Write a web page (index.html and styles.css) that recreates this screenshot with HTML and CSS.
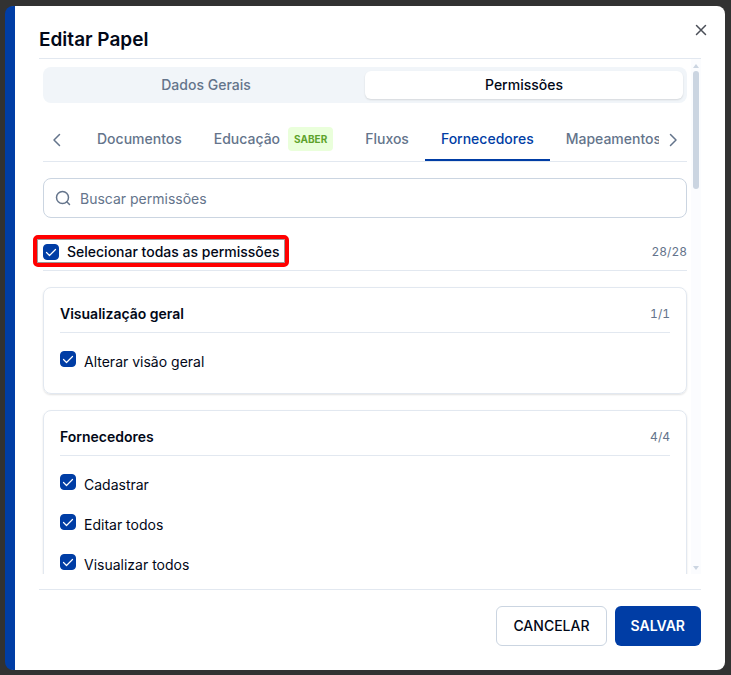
FILE: index.html
```html
<!DOCTYPE html>
<html lang="pt-BR">
<head>
  <meta charset="UTF-8">
  <meta name="viewport" content="width=device-width, initial-scale=1.0">
  <title>Editar Papel</title>
  <link rel="stylesheet" href="styles.css">
</head>

<body>
  <section class="modal" role="dialog" aria-labelledby="modalTitle">
    <header class="modal-header">
      <h1 id="modalTitle">Editar Papel</h1>
      <button type="button" class="btn-close" aria-label="Fechar">
        <svg width="16" height="16" viewBox="0 0 16 16"><path d="M3.5 3.5l9 9M12.5 3.5l-9 9"/></svg>
      </button>
    </header>

    <div class="modal-body">
      <div class="content">
        <div class="segmented">
          <button type="button">Dados Gerais</button>
          <button type="button" class="active">Permissões</button>
        </div>

        <!-- Abas dos módulos -->
        <nav class="tabs">
          <button type="button" class="tab-arrow" aria-label="Anterior">
            <svg width="16" height="16" viewBox="0 0 16 16"><path d="M10.500 2.500L5 8l5.500 5.500"/></svg>
          </button>
          <div class="tab-list">
            <button type="button" class="tab">Documentos</button>
            <button type="button" class="tab">Educação <span class="badge">SABER</span></button>
            <button type="button" class="tab">Fluxos</button>
            <button type="button" class="tab active">Fornecedores</button>
            <button type="button" class="tab">Mapeamentos</button>
          </div>
          <button type="button" class="tab-arrow" aria-label="Próximo">
            <svg width="16" height="16" viewBox="0 0 16 16"><path d="M5.500 2.500L11 8l-5.500 5.500"/></svg>
          </button>
        </nav>

        <div class="search">
          <svg width="16" height="16" viewBox="0 0 16 16"><circle cx="7.500" cy="7.500" r="6"/><path d="M11.800 11.800l2.700 2.700"/></svg>
          <input type="text" placeholder="Buscar permissões" aria-label="Buscar permissões">
        </div>

        <div class="select-all">
          <label class="highlight">
            <input type="checkbox" class="check" checked>
            Selecionar todas as permissões
          </label>
          <span class="count">28/28</span>
        </div>

        <div class="card">
          <div class="card-header">
            <h2>Visualização geral</h2>
            <span class="count">1/1</span>
          </div>
          <label class="item"><input type="checkbox" class="check" checked><span>Alterar visão geral</span></label>
        </div>

        <div class="card">
          <div class="card-header">
            <h2>Fornecedores</h2>
            <span class="count">4/4</span>
          </div>
          <label class="item"><input type="checkbox" class="check" checked><span>Cadastrar</span></label>
          <label class="item"><input type="checkbox" class="check" checked><span>Editar todos</span></label>
          <label class="item"><input type="checkbox" class="check" checked><span>Visualizar todos</span></label>
        </div>
      </div>

      <!-- Barra de rolagem -->
      <div class="scrollbar" aria-hidden="true">
        <svg width="6" height="4" viewBox="0 0 6 4"><path d="M3 0l3 4H0z"/></svg>
        <div class="track"><div class="thumb"></div></div>
        <svg width="6" height="4" viewBox="0 0 6 4"><path d="M3 4l3-4H0z"/></svg>
      </div>
    </div>

    <footer class="modal-footer">
      <button type="button" class="btn">CANCELAR</button>
      <button type="button" class="btn btn-primary">SALVAR</button>
    </footer>
  </section>
</body>
</html>
```

FILE: styles.css
```css
* {
  box-sizing: border-box;
}

body {
  background-color: #323232;
  height: 100vh;
  margin: 0;
  padding: 6px 6px 5px 5px;
  font-family: Inter, sans-serif;
  font-size: 14px;
  line-height: 20px;
  color: #020817;
}

button,
input {
  font: inherit;
  color: inherit;
}

button {
  background: none;
  border: 0;
  padding: 0;
  cursor: pointer;
}

svg {
  display: block;
  flex-shrink: 0;
  fill: none;
  stroke: #64748b;
  stroke-width: 1.5;
  stroke-linecap: round;
  stroke-linejoin: round;
}

h1,
h2 {
  margin: 0;
}

.modal {
  display: flex;
  flex-direction: column;
  height: 100%;
  padding: 16px 24px 24px;
  background-color: #fff;
  border-left: 10px solid #003da5;
  border-radius: 8px;
}

.modal-header {
  display: flex;
  align-items: flex-start;
  justify-content: space-between;
  height: 37px;
  border-bottom: 1px solid #e2e8f0;
}

.modal-header h1 {
  font-size: 19px;
  line-height: 36px;
  font-weight: 600;
}

.btn-close {
  margin-right: -8px;
}

.btn-close svg {
  stroke: #4b4f58;
}

.modal-body {
  display: flex;
  flex: 1;
  min-height: 0;
}

.content {
  flex: 1;
  min-width: 0;
  margin-left: -8px;
  padding: 8px 4px 8px 12px;
  overflow-y: auto;
  scrollbar-width: none;
}

.segmented {
  display: flex;
  padding: 4px;
  background-color: #f1f5f9;
  border-radius: 8px;
}

.segmented button {
  flex: 1;
  height: 28px;
  border-radius: 6px;
  color: #64748b;
  font-weight: 500;
}

.segmented .active {
  background-color: #fff;
  color: #020817;
  box-shadow: 0 1px 2px rgba(0, 0, 0, 0.12);
}

.tabs {
  display: flex;
  margin-top: 16px;
  border-bottom: 1px solid #e2e8f0;
}

.tab-arrow {
  display: flex;
  align-items: center;
  justify-content: center;
  width: 28px;
  flex-shrink: 0;
}

.tab-list {
  display: flex;
  flex: 1;
  min-width: 0;
  padding-left: 10px;
  overflow: hidden;
}

.tab {
  display: flex;
  align-items: center;
  gap: 8px;
  flex-shrink: 0;
  height: 42px;
  padding: 0 16px;
  border-bottom: 2px solid transparent;
  color: #64748b;
  font-weight: 500;
}

.tab.active {
  border-color: #003da5;
  color: #003da5;
}

.badge {
  padding: 2px 6px;
  border-radius: 4px;
  background-color: #eaffdb;
  color: #5ea32c;
  font-size: 10px;
  font-weight: 700;
}

.search {
  display: flex;
  align-items: center;
  gap: 9px;
  height: 40px;
  margin-top: 16px;
  padding: 0 11px;
  border: 1px solid #cbd5e1;
  border-radius: 8px;
}

.search input {
  flex: 1;
  min-width: 0;
  padding: 2px 0 0;
  border: 0;
  outline: none;
  background: none;
}

.search input::placeholder {
  color: #64748b;
  opacity: 1;
}

.select-all {
  display: flex;
  align-items: center;
  justify-content: space-between;
  margin: 17px 0 16px;
  padding-bottom: 3px;
  border-bottom: 1px solid #e2e8f0;
}

.select-all .count {
  padding-top: 2px;
}

.highlight {
  display: flex;
  align-items: center;
  gap: 8px;
  height: 32px;
  margin-left: -10px;
  padding: 2px 5px 0 6px;
  border: 4px solid #f00;
  border-radius: 5px;
  box-shadow: inset 0 0 0 1px #999;
  font-weight: 500;
}

.check {
  appearance: none;
  flex-shrink: 0;
  width: 16px;
  height: 16px;
  margin: 0;
  border: 1px solid #003da5;
  border-radius: 4px;
}

.check:checked {
  background: #003da5 url("data:image/svg+xml,%3Csvg xmlns='http://www.w3.org/2000/svg' viewBox='0 0 14 14'%3E%3Cpath d='M2.500 7.500l3 3 6-6' fill='none' stroke='white' stroke-width='1.200' stroke-linecap='round' stroke-linejoin='round'/%3E%3C/svg%3E") center / 14px no-repeat;
}

.count {
  color: #64748b;
  font-size: 12px;
  font-variant-numeric: tabular-nums;
}

.card {
  margin-bottom: 16px;
  padding: 16px;
  border: 1px solid #e2e8f0;
  border-radius: 8px;
  box-shadow: 0 1px 2px rgba(0, 0, 0, 0.12);
}

.card-header {
  display: flex;
  align-items: center;
  justify-content: space-between;
  margin-bottom: 16px;
  padding-bottom: 8px;
  border-bottom: 1px solid #e2e8f0;
}

.card-header h2 {
  font-size: 14px;
  font-weight: 600;
}

.item {
  display: flex;
  align-items: flex-start;
  gap: 8px;
  padding: 2px 0 4px;
}

.item span {
  line-height: 22px;
}

.item + .item {
  margin-top: 12px;
}

.scrollbar {
  display: flex;
  flex-direction: column;
  align-items: center;
  gap: 3px;
  width: 10px;
  padding: 5px 0 4px;
  background-color: #fbfcfe;
}

.scrollbar svg {
  fill: #cbd5e1;
  stroke: none;
}

.track {
  flex: 1;
  width: 6px;
}

.thumb {
  height: 24%;
  border-radius: 3px;
  background-color: #cbd5e1;
}

.modal-footer {
  display: flex;
  justify-content: flex-end;
  gap: 8px;
  margin-top: 15px;
  padding-top: 16px;
  border-top: 1px solid #e2e8f0;
}

.btn {
  height: 40px;
  padding: 0 16px;
  border: 1px solid #cbd5e1;
  border-radius: 6px;
  font-weight: 500;
}

.btn-primary {
  border: 0;
  background-color: #003da5;
  color: #fff;
  font-weight: 600;
}
```
